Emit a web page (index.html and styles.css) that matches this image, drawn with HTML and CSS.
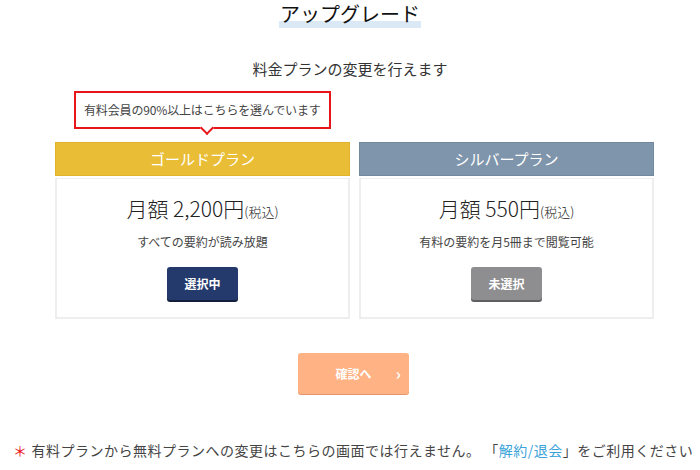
FILE: index.html
```html
<!DOCTYPE html>
<html lang="ja">
<head>
    <meta charset="UTF-8">
    <meta name="viewport" content="width=device-width, initial-scale=1.0">
    <title>アップグレード</title>
    <link rel="stylesheet" href="styles.css">
</head>
<body>
    <div class="page">
        <h1 class="title"><span>アップグレード</span></h1>
        <p class="lead">料金プランの変更を行えます</p>

        <div class="balloon">有料会員の90%以上はこちらを選んでいます</div>

        <div class="plans">
            <!-- Gold -->
            <div class="plan">
                <div class="plan-head gold">ゴールドプラン</div>
                <div class="plan-body">
                    <p class="price">月額 2,200円<small>(税込)</small></p>
                    <p class="desc">すべての要約が読み放題</p>
                    <button class="btn selected">選択中</button>
                </div>
            </div>
            <!-- Silver -->
            <div class="plan">
                <div class="plan-head silver">シルバープラン</div>
                <div class="plan-body">
                    <p class="price">月額 550円<small>(税込)</small></p>
                    <p class="desc">有料の要約を月5冊まで閲覧可能</p>
                    <button class="btn unselected">未選択</button>
                </div>
            </div>
        </div>

        <div class="confirm-wrap">
            <button class="confirm">確認へ<span class="arrow">›</span></button>
        </div>

        <p class="note"><span class="mark">＊</span>有料プランから無料プランへの変更はこちらの画面では行えません。 「<a href="#">解約/退会</a>」をご利用ください</p>
    </div>
</body>
</html>
```

FILE: styles.css
```css
body {
    margin: 0;
    padding: 0;
    background-color: #fff;
    font-family: "Noto Sans CJK JP", "Noto Sans", sans-serif;
    color: #333;
}
.page {
    width: 700px;
}
.title {
    margin: 0;
    padding-top: 2px;
    text-align: center;
    font-size: 20px;
    font-weight: 400;
    line-height: 24px;
    color: #111;
}
.title span {
    padding: 0 1px;
    background: linear-gradient(transparent 75%, #dbe8f6 75%);
}
.lead {
    margin: 33px 0 0;
    text-align: center;
    font-size: 15px;
    line-height: 20px;
    color: #333;
}
.balloon {
    position: relative;
    margin: 12px 0 0 74px;
    width: fit-content;
    height: 34px;
    padding: 0 8px;
    border: 2px solid #e8151b;
    font-size: 12px;
    line-height: 34px;
    letter-spacing: -0.15px;
    white-space: nowrap;
    color: #444;
    background: #fff;
}
.balloon::after {
    content: "";
    position: absolute;
    left: 126px;
    bottom: -6px;
    width: 8px;
    height: 8px;
    background: #fff;
    border-right: 2px solid #e8151b;
    border-bottom: 2px solid #e8151b;
    transform: rotate(45deg);
}
.plans {
    display: flex;
    gap: 9px;
    margin: 13px 0 0 55px;
}
.plan {
    width: 295px;
    display: flex;
    flex-direction: column;
    gap: 2px;
}
.plan-head {
    height: 32px;
    line-height: 32px;
    text-align: center;
    font-size: 15px;
    color: #fff;
}
.gold {
    background: #e9bd36;
    border: 1px solid #e2b42a;
}
.silver {
    background: #7f95ab;
    border: 1px solid #72889f;
}
.plan-body {
    height: 135px;
    border: 2px solid #eee;
    border-top-width: 1px;
    text-align: center;
    padding-top: 3px;
}
.price {
    margin: 11px 0 0;
    font-size: 21px;
    font-weight: 300;
    line-height: 30px;
    color: #222;
}
.price small {
    font-size: 13px;
}
.desc {
    margin: 7px 0 0;
    font-size: 12px;
    line-height: 16px;
    color: #444;
}
.btn {
    margin-top: 17px;
    width: 71px;
    height: 33px;
    border: none;
    border-radius: 3px;
    font-family: inherit;
    font-size: 12px;
    font-weight: 700;
    color: #fff;
}
.selected {
    background: #253a6c;
    box-shadow: 0 2px 0 #141f3c;
}
.unselected {
    background: #8e8e90;
    box-shadow: 0 2px 0 #5f5f62;
}
.confirm-wrap {
    margin: 34px 0 0 298px;
}
.confirm {
    position: relative;
    width: 111px;
    height: 41px;
    border: none;
    border-radius: 3px;
    background: #ffb283;
    box-shadow: 0 1px 0 #e8946a;
    font-family: inherit;
    font-size: 12px;
    font-weight: 700;
    color: #fff;
}
.arrow {
    position: absolute;
    right: 8px;
    top: 10px;
    font-size: 16px;
    line-height: 20px;
}
.note {
    margin: 46px 0 0 13px;
    font-size: 14px;
    line-height: 20px;
    letter-spacing: 0.5px;
    color: #444;
    white-space: nowrap;
}
.mark {
    color: #e8151b;
    margin-right: 4px;
}
.note a {
    color: #3ba3d9;
    text-decoration: none;
}
```
